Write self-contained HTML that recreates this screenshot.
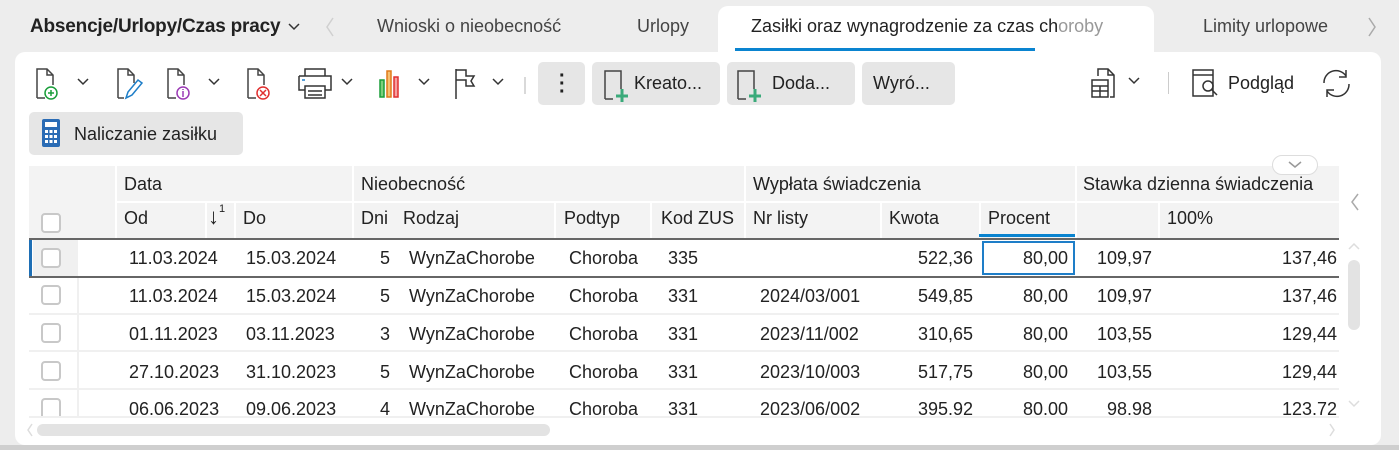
<!DOCTYPE html>
<html><head><meta charset="utf-8"><style>
*{margin:0;padding:0;box-sizing:border-box}
body{width:1399px;height:450px;overflow:hidden;background:#ededed;font-family:"Liberation Sans",sans-serif;color:#222;position:relative;font-size:18px}
.a{position:absolute;white-space:nowrap}
.card{position:absolute;left:15px;top:52px;width:1366px;height:393px;background:#fff;border-radius:10px}
.tab{position:absolute;left:718px;top:6px;width:436px;height:50px;background:#fff;border-radius:10px 10px 0 0}
.btn{position:absolute;background:#e6e6e6;border-radius:5px;height:43px;top:62px}
.hdr{position:absolute;left:29px;top:166px;width:1310px;height:72px;background:#f3f3f3}
.vl{position:absolute;width:2px;background:#fff}
.hl{position:absolute;height:2px;background:#fff}
.cb{position:absolute;width:20px;height:20px;border:2px solid #c8c8c8;border-radius:4px;background:#fff}
.r{text-align:right}
</style></head><body>
<div class="a" style="left:30px;top:16px;font-weight:bold;font-size:19px;letter-spacing:-0.2px">Absencje/Urlopy/Czas pracy</div>
<svg class="a" style="left:288px;top:22px" width="12" height="10"><path d="M1 2l5 5 5-5" fill="none" stroke="#333" stroke-width="1.5"/></svg>
<svg class="a" style="left:325px;top:16px" width="10" height="22"><path d="M8 2L2 11l6 9" fill="none" stroke="#d0d0d0" stroke-width="1.5"/></svg>
<div class="a" style="left:377px;top:16px;color:#444">Wnioski o nieobecność</div>
<div class="a" style="left:637px;top:16px;color:#444">Urlopy</div>
<div class="tab"></div>
<div class="a" style="left:751px;top:16px;width:392px;overflow:hidden;color:#222">Zasiłki oraz wynagrodzenie za czas ch<span style="color:#999">oroby</span></div>
<div class="a" style="left:735px;top:48px;width:300px;height:3px;background:#0a84d0"></div>
<div class="a" style="left:1203px;top:16px;color:#444">Limity urlopowe</div>
<svg class="a" style="left:1367px;top:16px" width="10" height="22"><path d="M2 2l6 9-6 9" fill="none" stroke="#aaa" stroke-width="1.5"/></svg>
<div class="card"></div>
<svg class="a" style="left:34px;top:66px" width="500" height="36" fill="none" stroke-width="1.5">
<g stroke="#444"><path d="M3 32V3h10l6 6v10M13 3v6h6M3 32h8"/></g><circle cx="17" cy="27" r="6" stroke="#1a9e3a"/><path d="M14 27h6M17 24v6" stroke="#1a9e3a"/>
<path d="M44 13l5 5 5-5" stroke="#333"/>
<g stroke="#444"><path d="M84 32V3h10l6 6v8M94 3v6h6M84 32h6"/></g><path d="M92 32l2-6 10-12 4 3-10 12z" stroke="#1e7ec8"/>
<g stroke="#444"><path d="M134 32V3h10l6 6v10M144 3v6h6M134 32h8"/></g><circle cx="149" cy="27" r="6" stroke="#9b3bb5"/><path d="M149 25v6M149 23v1" stroke="#9b3bb5"/>
<path d="M175 13l5 5 5-5" stroke="#333"/>
<g stroke="#444"><path d="M214 32V3h10l6 6v10M224 3v6h6M214 32h8"/></g><circle cx="229" cy="27" r="6" stroke="#e03030"/><path d="M226 24l6 6M232 24l-6 6" stroke="#e03030"/>
<g stroke="#333"><path d="M271 10V3h20v7M265 10h32v14h-6M265 10v14h6M271 20h20v12h-20zM274 25h14M274 29h14"/></g><path d="M268 14h3" stroke="#1e7ec8"/>
<path d="M308 13l5 5 5-5" stroke="#333"/>
<rect x="346" y="14" width="4" height="17" fill="#7ccf7c" stroke="#1a9e3a"/><rect x="353" y="5" width="4" height="26" fill="#f5c070" stroke="#e07a1a"/><rect x="360" y="11" width="4" height="20" fill="#f5a0a0" stroke="#e03030"/>
<path d="M385 13l5 5 5-5" stroke="#333"/>
<path d="M422 33V3M422 4h10v6h8l-3 5 3 5h-8v-6h-10" stroke="#333"/>
<path d="M459 13l5 5 5-5" stroke="#333"/>
<path d="M491 11v17" stroke="#ccc"/>
</svg>
<div class="btn" style="left:538px;width:47px"></div>
<div class="a" style="left:559px;top:72px;font-size:20px;line-height:8px;font-weight:bold;width:4px;text-align:center">·<br>·<br>·</div>
<div class="btn" style="left:592px;width:128px"></div>
<svg class="a" style="left:603px;top:69px" width="28" height="34" fill="none" stroke-width="1.5"><path d="M2 30V2h16v18M2 30h8" stroke="#444"/><path d="M19 20v13M13 27h12" stroke="#3aaa7a" stroke-width="3"/></svg>
<div class="a" style="left:634px;top:73px">Kreato...</div>
<div class="btn" style="left:727px;width:128px"></div>
<svg class="a" style="left:736px;top:69px" width="28" height="34" fill="none" stroke-width="1.5"><path d="M2 30V2h16v18M2 30h8" stroke="#444"/><path d="M19 20v13M13 27h12" stroke="#3aaa7a" stroke-width="3"/></svg>
<div class="a" style="left:772px;top:73px">Doda...</div>
<div class="btn" style="left:862px;width:93px"></div>
<div class="a" style="left:873px;top:73px">Wyró...</div>
<svg class="a" style="left:1090px;top:66px" width="60" height="34" fill="none" stroke-width="1.5" stroke="#333"><path d="M8 10V3h10l6 6v22h-4M18 3v6h6"/><rect x="2" y="14" width="16" height="17"/><path d="M2 20h16M10 20v11M2 25h16"/><path d="M39 12l5 5 5-5"/></svg>
<div class="a" style="left:1168px;top:72px;width:1px;height:22px;background:#ccc"></div>
<svg class="a" style="left:1191px;top:68px" width="36" height="32" fill="none" stroke-width="1.5" stroke="#333"><rect x="2" y="2" width="20" height="26"/><path d="M2 7h20"/><circle cx="17" cy="18" r="5"/><path d="M21 22l5 5"/></svg>
<div class="a" style="left:1228px;top:73px">Podgląd</div>
<svg class="a" style="left:1320px;top:67px" width="34" height="34" fill="none" stroke-width="1.5" stroke="#333"><path d="M4 16a12 12 0 0 1 22-7M26 3v7h-7M29 17a12 12 0 0 1-22 7M7 30v-7h7"/></svg>
<div class="btn" style="left:29px;top:112px;width:214px"></div>
<svg class="a" style="left:42px;top:119px" width="18" height="28"><rect x="0" y="0" width="18" height="28" rx="2" fill="#2b6cb5"/><rect x="3" y="3" width="12" height="5" fill="#fff"/><g fill="#fff"><rect x="3" y="11" width="3" height="3"/><rect x="7.5" y="11" width="3" height="3"/><rect x="12" y="11" width="3" height="3"/><rect x="3" y="16" width="3" height="3"/><rect x="7.5" y="16" width="3" height="3"/><rect x="12" y="16" width="3" height="3"/><rect x="3" y="21" width="3" height="3"/><rect x="7.5" y="21" width="3" height="3"/><rect x="12" y="21" width="3" height="3"/></g></svg>
<div class="a" style="left:74px;top:124px">Naliczanie zasiłku</div>
<div class="hdr"></div>
<div class="vl" style="left:115px;top:166px;height:72px"></div>
<div class="hl" style="left:115px;top:201px;width:1224px"></div>
<div class="vl" style="left:352px;top:166px;height:72px"></div>
<div class="vl" style="left:744px;top:166px;height:72px"></div>
<div class="vl" style="left:1075px;top:166px;height:72px"></div>
<div class="vl" style="left:205px;top:202px;height:36px"></div>
<div class="vl" style="left:234px;top:202px;height:36px"></div>
<div class="vl" style="left:554px;top:202px;height:36px"></div>
<div class="vl" style="left:650px;top:202px;height:36px"></div>
<div class="vl" style="left:880px;top:202px;height:36px"></div>
<div class="vl" style="left:979px;top:202px;height:36px"></div>
<div class="vl" style="left:1158px;top:202px;height:36px"></div>
<div class="a" style="left:1272px;top:155px;width:46px;height:20px;border:1px solid #ddd;border-radius:10px;background:#fff"></div>
<svg class="a" style="left:1287px;top:160px" width="16" height="10"><path d="M2 2l6 5 6-5" fill="none" stroke="#999" stroke-width="1.5"/></svg>
<div class="a" style="left:124px;top:174px">Data</div>
<div class="a" style="left:361px;top:174px">Nieobecność</div>
<div class="a" style="left:753px;top:174px">Wypłata świadczenia</div>
<div class="a" style="left:1083px;top:174px">Stawka dzienna świadczenia</div>
<div class="cb" style="left:41px;top:213px"></div>
<div class="a" style="left:124px;top:208px">Od</div>
<div class="a" style="left:208px;top:204px;font-size:22px">↓<sup style="font-size:11px;position:relative;top:-4px">1</sup></div>
<div class="a" style="left:243px;top:208px">Do</div>
<div class="a" style="left:361px;top:208px">Dni</div>
<div class="a" style="left:403px;top:208px">Rodzaj</div>
<div class="a" style="left:564px;top:208px">Podtyp</div>
<div class="a" style="left:661px;top:208px">Kod ZUS</div>
<div class="a" style="left:753px;top:208px">Nr listy</div>
<div class="a" style="left:889px;top:208px">Kwota</div>
<div class="a" style="left:988px;top:208px">Procent</div>
<div class="a" style="left:979px;top:234px;width:96px;height:3px;background:#0a84d0"></div>
<div class="a" style="left:1167px;top:208px">100%</div>
<svg class="a" style="left:1350px;top:192px" width="10" height="20"><path d="M8 2L2 10l6 8" fill="none" stroke="#aaa" stroke-width="1.5"/></svg>
<div class="a" style="left:29px;top:238px;width:1310px;height:40px;border-top:2px solid #666;border-bottom:2px solid #666"></div>
<div class="a" style="left:29px;top:240px;width:3px;height:36px;background:#1e6fb5"></div>
<div class="a" style="left:33px;top:240px;width:45px;height:36px;background:#f0f0f0"></div>
<div class="a" style="left:982px;top:241px;width:93px;height:34px;border:2px solid #1e7ec8"></div>
<div class="a" style="left:29px;top:313px;width:1310px;height:2px;background:#f0f0f0"></div>
<div class="a" style="left:29px;top:350px;width:1310px;height:2px;background:#f0f0f0"></div>
<div class="a" style="left:29px;top:388px;width:1310px;height:2px;background:#f0f0f0"></div>
<div class="a" style="left:29px;top:416px;width:1310px;height:2px;background:#f0f0f0"></div>
<div class="vl" style="left:77px;top:278px;height:138px;background:#f0f0f0"></div>
<div class="cb" style="left:41px;top:248px"></div>
<div class="cb" style="left:41px;top:285px"></div>
<div class="cb" style="left:41px;top:323px"></div>
<div class="cb" style="left:41px;top:361px"></div>
<div class="cb" style="left:41px;top:398px;height:18px;border-bottom:none;border-radius:4px 4px 0 0"></div>
<div style="position:absolute;left:0;top:0;width:1399px;height:416px;overflow:hidden">
<div class="a" style="left:129px;top:248px">11.03.2024</div><div class="a" style="left:246px;top:248px">15.03.2024</div><div class="a r" style="left:350px;top:248px;width:40px">5</div><div class="a" style="left:409px;top:248px">WynZaChorobe</div><div class="a" style="left:569px;top:248px">Choroba</div><div class="a" style="left:668px;top:248px">335</div><div class="a r" style="left:860px;top:248px;width:113px">522,36</div><div class="a r" style="left:960px;top:248px;width:108px">80,00</div><div class="a r" style="left:1050px;top:248px;width:102px">109,97</div><div class="a r" style="left:1200px;top:248px;width:137px">137,46</div>
<div class="a" style="left:129px;top:286px">11.03.2024</div><div class="a" style="left:246px;top:286px">15.03.2024</div><div class="a r" style="left:350px;top:286px;width:40px">5</div><div class="a" style="left:409px;top:286px">WynZaChorobe</div><div class="a" style="left:569px;top:286px">Choroba</div><div class="a" style="left:668px;top:286px">331</div><div class="a" style="left:760px;top:286px">2024/03/001</div><div class="a r" style="left:860px;top:286px;width:113px">549,85</div><div class="a r" style="left:960px;top:286px;width:108px">80,00</div><div class="a r" style="left:1050px;top:286px;width:102px">109,97</div><div class="a r" style="left:1200px;top:286px;width:137px">137,46</div>
<div class="a" style="left:129px;top:324px">01.11.2023</div><div class="a" style="left:246px;top:324px">03.11.2023</div><div class="a r" style="left:350px;top:324px;width:40px">3</div><div class="a" style="left:409px;top:324px">WynZaChorobe</div><div class="a" style="left:569px;top:324px">Choroba</div><div class="a" style="left:668px;top:324px">331</div><div class="a" style="left:760px;top:324px">2023/11/002</div><div class="a r" style="left:860px;top:324px;width:113px">310,65</div><div class="a r" style="left:960px;top:324px;width:108px">80,00</div><div class="a r" style="left:1050px;top:324px;width:102px">103,55</div><div class="a r" style="left:1200px;top:324px;width:137px">129,44</div>
<div class="a" style="left:129px;top:362px">27.10.2023</div><div class="a" style="left:246px;top:362px">31.10.2023</div><div class="a r" style="left:350px;top:362px;width:40px">5</div><div class="a" style="left:409px;top:362px">WynZaChorobe</div><div class="a" style="left:569px;top:362px">Choroba</div><div class="a" style="left:668px;top:362px">331</div><div class="a" style="left:760px;top:362px">2023/10/003</div><div class="a r" style="left:860px;top:362px;width:113px">517,75</div><div class="a r" style="left:960px;top:362px;width:108px">80,00</div><div class="a r" style="left:1050px;top:362px;width:102px">103,55</div><div class="a r" style="left:1200px;top:362px;width:137px">129,44</div>
<div class="a" style="left:129px;top:399px">06.06.2023</div><div class="a" style="left:246px;top:399px">09.06.2023</div><div class="a r" style="left:350px;top:399px;width:40px">4</div><div class="a" style="left:409px;top:399px">WynZaChorobe</div><div class="a" style="left:569px;top:399px">Choroba</div><div class="a" style="left:668px;top:399px">331</div><div class="a" style="left:760px;top:399px">2023/06/002</div><div class="a r" style="left:860px;top:399px;width:113px">395.92</div><div class="a r" style="left:960px;top:399px;width:108px">80.00</div><div class="a r" style="left:1050px;top:399px;width:102px">98.98</div><div class="a r" style="left:1200px;top:399px;width:137px">123.72</div>
</div>
<div class="a" style="left:1348px;top:260px;width:12px;height:70px;background:#e3e3e3;border-radius:6px"></div>
<svg class="a" style="left:1347px;top:240px" width="14" height="12"><path d="M2 9l5-5 5 5" fill="none" stroke="#ddd" stroke-width="1.5"/></svg>
<svg class="a" style="left:1347px;top:398px" width="14" height="12"><path d="M2 3l5 5 5-5" fill="none" stroke="#ddd" stroke-width="1.5"/></svg>
<div class="a" style="left:37px;top:424px;width:513px;height:12px;background:#e3e3e3;border-radius:6px"></div>
<svg class="a" style="left:25px;top:422px" width="10" height="16"><path d="M7 2L3 8l4 6" fill="none" stroke="#ddd" stroke-width="1.5"/></svg>
<svg class="a" style="left:1327px;top:422px" width="10" height="16"><path d="M3 2l4 6-4 6" fill="none" stroke="#ddd" stroke-width="1.5"/></svg>
<div class="a" style="left:0;top:445px;width:1399px;height:5px;background:#cfcfcf"></div>
</body></html>
